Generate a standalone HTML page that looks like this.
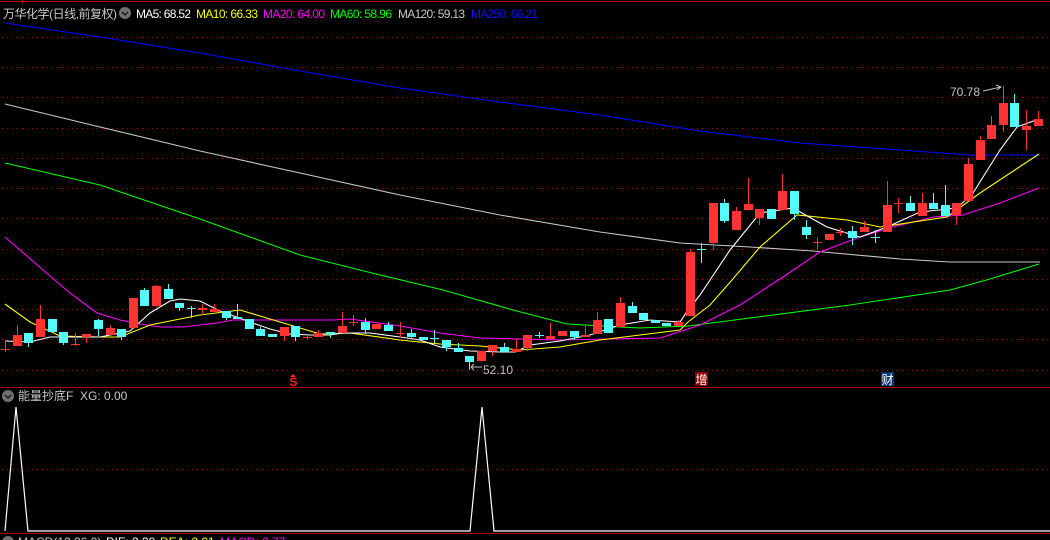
<!DOCTYPE html>
<html><head><meta charset="utf-8"><style>
html,body{margin:0;padding:0;background:#000;width:1050px;height:540px;overflow:hidden}
svg{display:block}
text{font-family:"Liberation Sans","Noto Sans CJK SC",sans-serif;font-size:12px}
</style></head><body>
<svg width="1050" height="540" viewBox="0 0 1050 540" xmlns="http://www.w3.org/2000/svg">
<rect width="1050" height="540" fill="#000"/>
<g stroke="#b00000" stroke-width="1" shape-rendering="crispEdges">
<line x1="0" y1="1.5" x2="1050" y2="1.5"/>
<line x1="22.5" y1="0" x2="22.5" y2="4"/>
<line x1="0" y1="387.5" x2="1050" y2="387.5"/>
<line x1="0" y1="533.5" x2="1050" y2="533.5"/>
</g>
<g stroke="#b00000" stroke-width="1" stroke-dasharray="1 4" shape-rendering="crispEdges">
<line x1="2" y1="37.5" x2="1050" y2="37.5"/>
<line x1="2" y1="67.5" x2="1050" y2="67.5"/>
<line x1="2" y1="97.5" x2="1050" y2="97.5"/>
<line x1="2" y1="128.5" x2="1050" y2="128.5"/>
<line x1="2" y1="158.5" x2="1050" y2="158.5"/>
<line x1="2" y1="188.5" x2="1050" y2="188.5"/>
<line x1="2" y1="218.5" x2="1050" y2="218.5"/>
<line x1="2" y1="249.5" x2="1050" y2="249.5"/>
<line x1="2" y1="279.5" x2="1050" y2="279.5"/>
<line x1="2" y1="309.5" x2="1050" y2="309.5"/>
<line x1="2" y1="339.5" x2="1050" y2="339.5"/>
<line x1="2" y1="370.5" x2="1050" y2="370.5"/>
<line x1="2" y1="469.5" x2="1050" y2="469.5"/>
</g>
<g fill="none" stroke-width="1.1">
<polyline stroke="#0000ff" points="5,23 100,37 200,53 300,71 400,88 500,102 600,115 700,131 800,143 900,150 970,155 1040,155"/>
<polyline stroke="#c8c8c8" points="5,104 100,127 200,151 300,173 400,195 500,215 600,232 680,243 750,247 813,251 900,259 950,262 1040,262"/>
<polyline stroke="#00ff00" points="5,163 100,185 200,219 300,255 380,275 443,290 513,310 567,324 640,328 688,326 750,318 850,305 950,290 990,279 1039,264"/>
<polyline stroke="#ff00ff" points="5,237 43,270 70,293 97,313 120,320 140,324 160,327 183,327 217,323 233,320 267,320 333,320 350,319 400,326 440,333 480,338 560,340 610,339 660,338 700,325 740,305 783,277 820,252 860,237 893,227 933,217 963,215 1000,203 1039,188"/>
<polyline stroke="#ffff00" points="5,304 30,322 60,336 100,337 120,337 150,325 200,315 240,310 280,322 320,334 350,333 400,340 440,344 480,346 520,350 560,347 600,340 640,335 680,330 688,322 710,305 732,280 760,247 797,215 847,220 880,227 947,217 980,193 1039,154"/>
<polyline stroke="#ffffff" points="5,341 30,342 50,337 100,337 130,331 150,313 170,301 180,299 200,301 220,311 250,322 270,329 290,334 310,335 330,335 343,333 370,333 400,337 420,340 440,347 470,351 500,352 515,352 530,345 560,341 590,335 620,325 650,320 680,322 688,310 700,295 710,280 730,250 760,213 793,208 827,227 860,237 887,227 920,212 957,208 973,193 1000,150 1017,127 1039,119"/>
</g>
<g stroke="#ff3333" fill="#ff3333" shape-rendering="crispEdges">
<path fill="none" d="M5.5 342V352M17.5 325V346M40.5 305V337M75.5 333V346M86.5 334V343M110.5 325V335M133.5 298V328M156.5 285V307M202.5 304V315M214.5 304V312M284.5 327V341M307.5 335V340M318.5 330V337M342.5 312V333M353.5 315V326M376.5 324V329M400.5 322V338M481.5 351V361M492.5 345V356M516.5 339V352M527.5 335V351M550.5 323V339M562.5 331V336M585.5 325V337M597.5 312V334M620.5 297V327M678.5 320V326M690.5 249V316M713.5 203V250M736.5 207V230M748.5 178V210M759.5 209V225M782.5 174V210M817.5 237V250M829.5 234V240M840.5 228V236M864.5 221V232M887.5 181V232M898.5 198V213M922.5 193V216M956.5 203V225M968.5 158V201M980.5 136V160M991.5 116V139M1003.5 86V132M1026.5 110V150M1038.5 111V126"/>
<g stroke="none">
<rect x="1" y="349" width="9" height="1"/><rect x="13" y="335" width="9" height="11"/><rect x="36" y="319" width="9" height="18"/><rect x="71" y="344" width="9" height="1"/><rect x="82" y="334" width="9" height="3"/><rect x="106" y="328" width="9" height="7"/><rect x="129" y="298" width="9" height="30"/><rect x="152" y="286" width="9" height="20"/><rect x="198" y="308" width="9" height="2"/><rect x="210" y="309" width="9" height="3"/><rect x="280" y="327" width="9" height="9"/><rect x="303" y="337" width="9" height="1"/><rect x="314" y="333" width="9" height="4"/><rect x="338" y="326" width="9" height="7"/><rect x="349" y="322" width="9" height="1"/><rect x="372" y="324" width="9" height="5"/><rect x="396" y="333" width="9" height="1"/><rect x="477" y="351" width="9" height="10"/><rect x="488" y="345" width="9" height="6"/><rect x="512" y="349" width="9" height="3"/><rect x="523" y="335" width="9" height="13"/><rect x="546" y="336" width="9" height="3"/><rect x="558" y="331" width="9" height="5"/><rect x="581" y="335" width="9" height="2"/><rect x="593" y="320" width="9" height="14"/><rect x="616" y="303" width="9" height="24"/><rect x="674" y="322" width="9" height="4"/><rect x="686" y="252" width="9" height="64"/><rect x="709" y="203" width="9" height="40"/><rect x="732" y="211" width="9" height="19"/><rect x="744" y="204" width="9" height="6"/><rect x="755" y="209" width="9" height="9"/><rect x="778" y="191" width="9" height="19"/><rect x="813" y="242" width="9" height="1"/><rect x="825" y="234" width="9" height="6"/><rect x="836" y="232" width="9" height="1"/><rect x="860" y="227" width="9" height="5"/><rect x="883" y="205" width="9" height="27"/><rect x="894" y="203" width="9" height="1"/><rect x="918" y="203" width="9" height="13"/><rect x="952" y="203" width="9" height="12"/><rect x="964" y="164" width="9" height="37"/><rect x="976" y="140" width="9" height="20"/><rect x="987" y="125" width="9" height="14"/><rect x="999" y="103" width="9" height="22"/><rect x="1022" y="126" width="9" height="4"/><rect x="1034" y="119" width="9" height="7"/>
</g></g>
<g stroke="#54fcfc" fill="#54fcfc" shape-rendering="crispEdges">
<path fill="none" d="M28.5 333V347M52.5 319V332M63.5 332V345M98.5 319V336M121.5 329V340M144.5 288V306M168.5 284V299M179.5 303V311M191.5 306V318M226.5 311V320M237.5 304V319M249.5 319V329M260.5 327V336M272.5 334V337M295.5 326V341M330.5 332V338M365.5 318V334M388.5 322V331M411.5 329V339M423.5 337V340M434.5 330V343M446.5 340V351M458.5 343V352M469.5 356V370M504.5 343V352M539.5 332V338M574.5 331V340M608.5 319V333M632.5 302V313M643.5 313V320M655.5 320V323M666.5 323V326M701.5 243V263M724.5 199V223M771.5 209V219M794.5 191V220M806.5 220V239M852.5 226V245M875.5 230V243M910.5 196V211M933.5 193V209M945.5 185V216M1014.5 94V127"/>
<g stroke="none">
<rect x="24" y="333" width="9" height="10"/><rect x="48" y="319" width="9" height="13"/><rect x="59" y="332" width="9" height="11"/><rect x="94" y="320" width="9" height="9"/><rect x="117" y="329" width="9" height="8"/><rect x="140" y="290" width="9" height="16"/><rect x="164" y="289" width="9" height="10"/><rect x="175" y="303" width="9" height="5"/><rect x="187" y="308" width="9" height="1"/><rect x="222" y="311" width="9" height="7"/><rect x="233" y="317" width="9" height="2"/><rect x="245" y="319" width="9" height="10"/><rect x="256" y="329" width="9" height="7"/><rect x="268" y="334" width="9" height="3"/><rect x="291" y="326" width="9" height="11"/><rect x="326" y="332" width="9" height="2"/><rect x="361" y="322" width="9" height="8"/><rect x="384" y="325" width="9" height="6"/><rect x="407" y="333" width="9" height="4"/><rect x="419" y="337" width="9" height="3"/><rect x="430" y="338" width="9" height="1"/><rect x="442" y="340" width="9" height="7"/><rect x="454" y="348" width="9" height="4"/><rect x="465" y="356" width="9" height="6"/><rect x="500" y="347" width="9" height="5"/><rect x="535" y="335" width="9" height="1"/><rect x="570" y="331" width="9" height="6"/><rect x="604" y="319" width="9" height="14"/><rect x="628" y="306" width="9" height="7"/><rect x="639" y="313" width="9" height="7"/><rect x="651" y="320" width="9" height="3"/><rect x="662" y="323" width="9" height="3"/><rect x="697" y="249" width="9" height="1"/><rect x="720" y="203" width="9" height="18"/><rect x="767" y="209" width="9" height="10"/><rect x="790" y="191" width="9" height="23"/><rect x="802" y="227" width="9" height="8"/><rect x="848" y="231" width="9" height="7"/><rect x="871" y="237" width="9" height="1"/><rect x="906" y="203" width="9" height="8"/><rect x="929" y="203" width="9" height="6"/><rect x="941" y="205" width="9" height="11"/><rect x="1010" y="103" width="9" height="24"/>
</g></g>
<text x="950" y="96" fill="#c0c0c0">70.78</text>
<path d="M983 91L1001 87M996 85L1001 87L997 90" stroke="#c0c0c0" fill="none"/>
<text x="483" y="374" fill="#c0c0c0">52.10</text>
<path d="M471 367H482M474 364L471 367L474 370" stroke="#c0c0c0" fill="none"/>
<path d="M293 374L290 377H296Z" fill="#ff2020"/>
<text x="289.5" y="386" fill="#ff2020" font-size="10" font-weight="bold">S</text>
<rect x="695" y="372" width="13" height="14" fill="#8c0000"/>
<text x="695.5" y="384" fill="#fff" font-size="12">增</text>
<rect x="881" y="372" width="13" height="14" fill="#0a3a70"/>
<text x="881.5" y="384" fill="#fff" font-size="12">财</text>
<g font-size="13">
<text x="3" y="18" fill="#c8c8c8" font-size="13" textLength="114">万华化学(日线,前复权)</text>
<text x="136" y="18" fill="#ffffff" textLength="55">MA5: 68.52</text>
<text x="196" y="18" fill="#ffff00" textLength="62">MA10: 66.33</text>
<text x="263" y="18" fill="#ff00ff" textLength="62">MA20: 64.00</text>
<text x="330" y="18" fill="#00ff00" textLength="62">MA60: 58.96</text>
<text x="398" y="18" fill="#c8c8c8" textLength="67">MA120: 59.13</text>
<text x="471" y="18" fill="#1010ff" textLength="67">MA250: 66.21</text>
</g>
<circle cx="125" cy="13" r="6" fill="#707070"/>
<path d="M122 12L125 15L128 12" stroke="#111" stroke-width="1.3" fill="none"/>
<circle cx="8" cy="396" r="6" fill="#707070"/>
<path d="M5 395L8 398L11 395" stroke="#111" stroke-width="1.3" fill="none"/>
<text x="18" y="400" fill="#c8c8c8" font-size="13">能量抄底F&#160; XG: 0.00</text>
<polyline fill="none" stroke="#ffffff" stroke-width="1.2" points="5,531 16,407 28,531 470,531 482,407 494,531 1050,531"/>
<circle cx="8" cy="542" r="6" fill="#707070"/>
<text x="18" y="546" fill="#c8c8c8">MACD(12,26,9)</text>
<text x="106" y="546" fill="#ffffff">DIF: 2.38</text>
<text x="160" y="546" fill="#ffff00">DEA: 2.01</text>
<text x="220" y="546" fill="#ff00ff">MACD: 0.77</text>
</svg>
</body></html>
